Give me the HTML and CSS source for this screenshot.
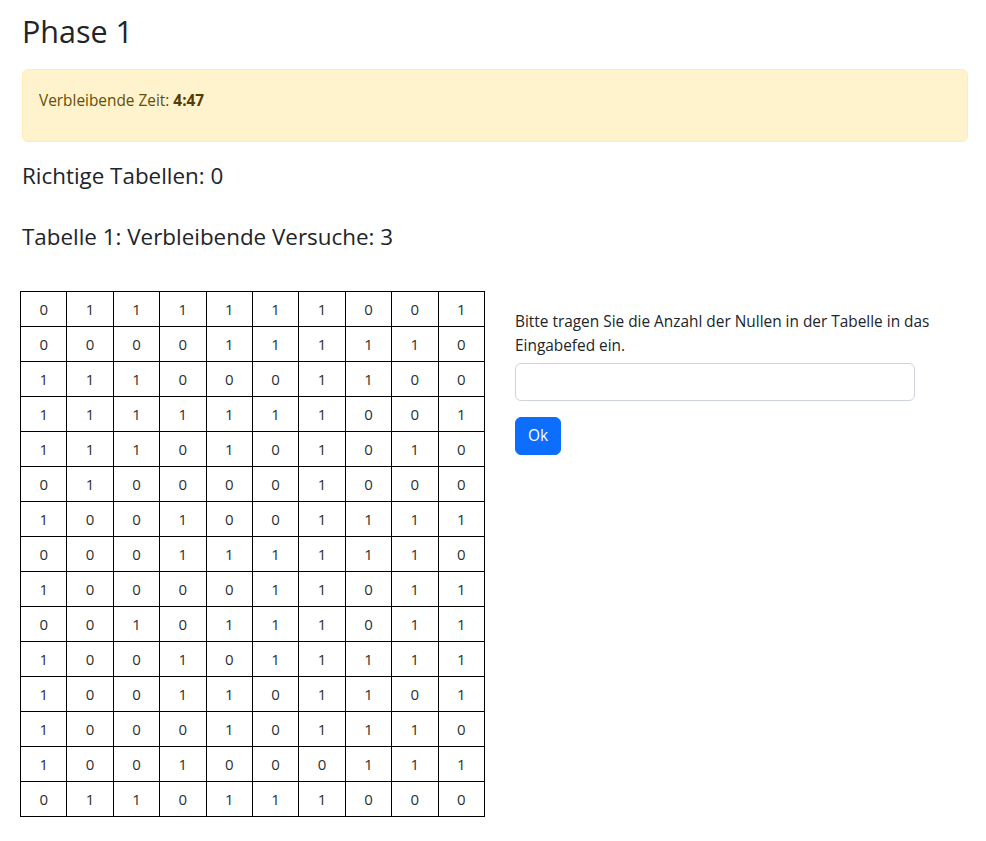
FILE: index.html
```html
<!DOCTYPE html>
<html lang="de">
<head>
<meta charset="utf-8">
<title>Phase 1</title>
<link rel="stylesheet" href="styles.css">
</head>
<body>
<main class="page">
  <h1 class="title">Phase 1</h1>
  <div class="alert">
    <p class="alert-text">Verbleibende Zeit: <strong>4:47</strong></p>
  </div>
  <h4 class="subhead score">Richtige Tabellen: 0</h4>
  <h4 class="subhead tries">Tabelle 1: Verbleibende Versuche: 3</h4>
  <div class="task">
    <table class="grid">
      <tbody>
        <tr><td>0</td><td>1</td><td>1</td><td>1</td><td>1</td><td>1</td><td>1</td><td>0</td><td>0</td><td>1</td></tr>
        <tr><td>0</td><td>0</td><td>0</td><td>0</td><td>1</td><td>1</td><td>1</td><td>1</td><td>1</td><td>0</td></tr>
        <tr><td>1</td><td>1</td><td>1</td><td>0</td><td>0</td><td>0</td><td>1</td><td>1</td><td>0</td><td>0</td></tr>
        <tr><td>1</td><td>1</td><td>1</td><td>1</td><td>1</td><td>1</td><td>1</td><td>0</td><td>0</td><td>1</td></tr>
        <tr><td>1</td><td>1</td><td>1</td><td>0</td><td>1</td><td>0</td><td>1</td><td>0</td><td>1</td><td>0</td></tr>
        <tr><td>0</td><td>1</td><td>0</td><td>0</td><td>0</td><td>0</td><td>1</td><td>0</td><td>0</td><td>0</td></tr>
        <tr><td>1</td><td>0</td><td>0</td><td>1</td><td>0</td><td>0</td><td>1</td><td>1</td><td>1</td><td>1</td></tr>
        <tr><td>0</td><td>0</td><td>0</td><td>1</td><td>1</td><td>1</td><td>1</td><td>1</td><td>1</td><td>0</td></tr>
        <tr><td>1</td><td>0</td><td>0</td><td>0</td><td>0</td><td>1</td><td>1</td><td>0</td><td>1</td><td>1</td></tr>
        <tr><td>0</td><td>0</td><td>1</td><td>0</td><td>1</td><td>1</td><td>1</td><td>0</td><td>1</td><td>1</td></tr>
        <tr><td>1</td><td>0</td><td>0</td><td>1</td><td>0</td><td>1</td><td>1</td><td>1</td><td>1</td><td>1</td></tr>
        <tr><td>1</td><td>0</td><td>0</td><td>1</td><td>1</td><td>0</td><td>1</td><td>1</td><td>0</td><td>1</td></tr>
        <tr><td>1</td><td>0</td><td>0</td><td>0</td><td>1</td><td>0</td><td>1</td><td>1</td><td>1</td><td>0</td></tr>
        <tr><td>1</td><td>0</td><td>0</td><td>1</td><td>0</td><td>0</td><td>0</td><td>1</td><td>1</td><td>1</td></tr>
        <tr><td>0</td><td>1</td><td>1</td><td>0</td><td>1</td><td>1</td><td>1</td><td>0</td><td>0</td><td>0</td></tr>
      </tbody>
    </table>
    <form class="answer">
      <label class="answer-label" for="zeros">Bitte tragen Sie die Anzahl der Nullen in der Tabelle in das Eingabefed ein.</label>
      <input class="answer-input" id="zeros" type="text">
      <button class="btn" type="button">Ok</button>
    </form>
  </div>
</main>
</body>
</html>
```

FILE: styles.css
```css
* { box-sizing: border-box; }

html, body {
  margin: 0;
  padding: 0;
  background: #fff;
}

body {
  font-family: "Open Sans", "Noto Sans", sans-serif;
  font-size: 15.4px;
  line-height: 1.5;
  color: #212529;
}

.page {
  padding: 12px 18px 0 22px;
}

.title {
  margin: 0 0 19px;
  font-size: 30.5px;
  font-weight: 400;
  line-height: 38px;
}

.alert {
  height: 73px;
  padding: 16px 16px;
  background: #fff3cd;
  border: 1px solid #ffecb5;
  border-radius: 6px;
  color: #664d03;
}

.alert-text {
  margin: 0;
  padding-top: 3px;
}

.alert-text strong {
  font-weight: 700;
  color: #523e02;
}

.subhead {
  margin: 0;
  font-size: 22.4px;
  font-weight: 400;
  line-height: 28px;
}

.score {
  margin-top: 20px;
}

.tries {
  margin-top: 33px;
}

.task {
  display: flex;
  align-items: flex-start;
  gap: 30px;
  margin-top: 40px;
  margin-left: -2px;
}

.grid {
  border-collapse: collapse;
  width: 465px;
  table-layout: fixed;
  font-size: 15px;
  color: #2b2f33;
}

.grid td {
  border: 1px solid #000;
  height: 35px;
  padding: 0;
  text-align: center;
  vertical-align: middle;
}

.answer {
  display: flex;
  flex-direction: column;
  align-items: flex-start;
  width: 425px;
  padding-top: 19px;
}

.answer-label {
  display: block;
  margin-bottom: 5px;
  line-height: 24px;
}

.answer-input {
  width: 400px;
  height: 38px;
  padding: 6px 12px;
  border: 1px solid #ced4da;
  border-radius: 6px;
  font: inherit;
  color: #212529;
  background: #fff;
}

.btn {
  margin-top: 16px;
  height: 38px;
  padding: 6px 12px;
  font: inherit;
  font-size: 15.4px;
  line-height: 24px;
  color: #fff;
  background: #0d6efd;
  border: 1px solid #0d6efd;
  border-radius: 6px;
}
```
